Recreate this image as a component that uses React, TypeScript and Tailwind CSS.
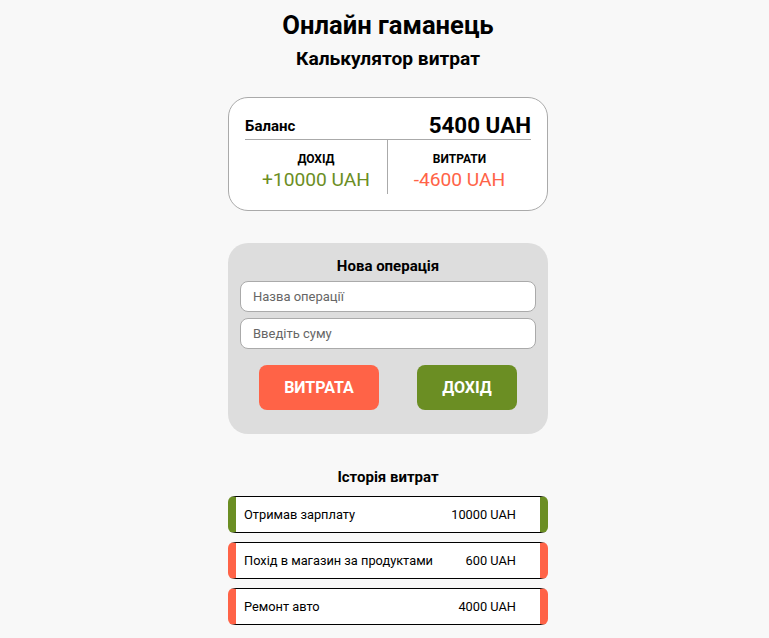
const history = [
  { id: 1, title: "Отримав зарплату", amount: 10000, type: "income" },
  { id: 2, title: "Похід в магазин за продуктами", amount: 600, type: "expense" },
  { id: 3, title: "Ремонт авто", amount: 4000, type: "expense" },
];

export default function App() {
  return (
    <div className="min-h-[638px] bg-[#f8f8f8] text-black font-['Roboto',sans-serif] flex flex-col items-center pt-[10px] pl-[7px]">
      <h1 className="text-[25.6px] font-bold leading-[30px]">Онлайн гаманець</h1>
      <h2 className="text-[19.2px] font-bold leading-[24px] mt-[7px]">Калькулятор витрат</h2>

      <div className="w-[320px] mt-[26px] bg-white border border-[#aaa] rounded-[20px] px-[16px] pt-[14px] pb-[16px]">
        <div className="flex items-end justify-between border-b border-[#aaa] pb-[1px]">
          <span className="text-[15px] font-bold leading-[20px] mb-[2px]">Баланс</span>
          <span className="text-[22.4px] font-bold leading-[26px]">5400 UAH</span>
        </div>
        <div className="grid grid-cols-2">
          <div className="flex flex-col items-center pt-[12px] pb-[2px] border-r border-[#aaa]">
            <span className="text-[12px] font-bold leading-[14px]">ДОХІД</span>
            <span className="text-[19.2px] leading-[24px] mt-[2px] text-[#6b8e23]">+10000 UAH</span>
          </div>
          <div className="flex flex-col items-center pt-[12px] pb-[2px]">
            <span className="text-[12px] font-bold leading-[14px]">ВИТРАТИ</span>
            <span className="text-[19.2px] leading-[24px] mt-[2px] text-[#ff6347]">-4600 UAH</span>
          </div>
        </div>
      </div>

      <div className="w-[320px] mt-[32px] bg-[#ddd] rounded-[20px] px-[12px] pt-[14px] pb-[24px]">
        <h3 className="text-center text-[15px] font-bold leading-[18px]">Нова операція</h3>
        <div className="flex flex-col gap-[6px] mt-[6px]">
          <input
            placeholder="Назва операції"
            className="h-[31px] w-full bg-white border border-[#aaa] rounded-[8px] px-[12px] text-[13px] placeholder:text-[#666] outline-none"
          />
          <input
            placeholder="Введіть суму"
            className="h-[31px] w-full bg-white border border-[#aaa] rounded-[8px] px-[12px] text-[13px] placeholder:text-[#666] outline-none"
          />
        </div>
        <div className="flex justify-around mt-[16px]">
          <button className="w-[120px] h-[45px] rounded-[8px] bg-[#ff6347] text-white text-[16px] font-bold">ВИТРАТА</button>
          <button className="w-[100px] h-[45px] rounded-[8px] bg-[#6b8e23] text-white text-[16px] font-bold">ДОХІД</button>
        </div>
      </div>

      <h3 className="mt-[34px] text-[15px] font-bold leading-[18px]">Історія витрат</h3>
      <ul className="w-[320px] mt-[10px] flex flex-col gap-[9px]">
        {history.map((h) => (
          <li
            key={h.id}
            className={
              "h-[37px] flex items-center justify-between bg-white border border-black rounded-[6px] border-l-[8px] border-r-[8px] pl-[8px] pr-[24px] text-[12.8px] " +
              (h.type === "income" ? "border-l-[#6b8e23] border-r-[#6b8e23]" : "border-l-[#ff6347] border-r-[#ff6347]")
            }
          >
            <span>{h.title}</span>
            <span>{h.amount} UAH</span>
          </li>
        ))}
      </ul>
    </div>
  );
}
